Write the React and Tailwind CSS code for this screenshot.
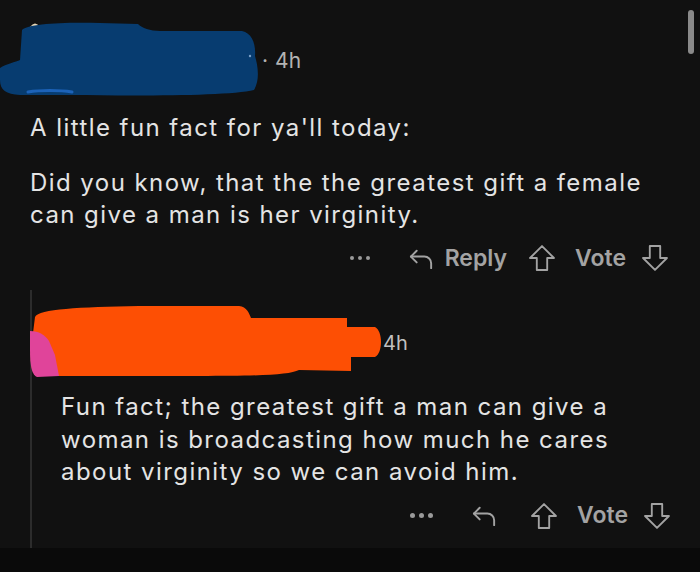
import React from 'react';

const ReplyIcon = ({ className }) => (
  <svg className={className} viewBox="0 0 28 28" fill="none" stroke="currentColor" strokeWidth={2} strokeLinecap="round" strokeLinejoin="round">
    <path d="M9 6 L3 12 L9 18" />
    <path d="M3 12 H17 a7 7 0 0 1 7 7 v5" />
  </svg>
);

const UpIcon = ({ className }) => (
  <svg className={className} viewBox="1.5 1.5 25 25" fill="none" stroke="currentColor" strokeWidth={1.8} strokeLinejoin="round">
    <path d="M14 2.5 L2.5 14 H9 V25.5 H19 V14 H25.5 Z" />
  </svg>
);

const DownIcon = ({ className }) => (
  <svg className={className} viewBox="1.5 1.5 25 25" fill="none" stroke="currentColor" strokeWidth={1.8} strokeLinejoin="round">
    <path d="M14 25.5 L2.5 14 H9 V2.5 H19 V14 H25.5 Z" />
  </svg>
);

const Dots = ({ size = 'w-[4px] h-[4px]' }) => (
  <div className="flex items-center gap-[4px]">
    <span className={`${size} rounded-full bg-[#9a9a9a]`} />
    <span className={`${size} rounded-full bg-[#9a9a9a]`} />
    <span className={`${size} rounded-full bg-[#9a9a9a]`} />
  </div>
);

export default function App() {
  return (
    <div className="w-[700px] h-[572px] bg-[#111111] overflow-hidden relative text-[#e4e4e4]" style={{ fontFamily: 'Inter, "Noto Sans", sans-serif' }}>
      {/* scrollbar */}
      <div className="absolute right-[6px] top-[10px] w-[6px] h-[44px] rounded-full bg-[#8a8a8a]" />

      {/* top comment */}
      <div className="h-[112px] flex items-center pb-[6px]">
        <div className="relative w-[262px] h-[80px]">
          <svg className="absolute left-0 top-[2px]" width="262" height="90" viewBox="0 15 262 90">
            <path d="M30 27 q5 -7 10 0 z" fill="#e8d8b8" />
            <path d="M22 30 C28 24 60 22 100 23 L138 24 C142 28 150 31 160 31 L242 31 C252 33 256 44 255 56 C258 66 260 80 254 90 C230 96 140 96 70 95 L20 95 C6 94 0 90 0 80 L0 68 C6 64 16 62 20 60 Z" fill="#073c70" />
            <path d="M28 92 C40 90 60 90 72 92" stroke="#1c62b8" strokeWidth="3" fill="none" strokeLinecap="round" />
            <circle cx="250" cy="56" r="1.2" fill="#7aa0c8" />
          </svg>
        </div>
        <span className="text-[21px] leading-none text-[#b3b3b3] mt-[14px]">·</span>
        <span className="text-[21px] leading-none text-[#b3b3b3] ml-[7px] mt-[14px]">4h</span>
      </div>

      <div className="pl-[30px] pr-[10px] text-[24px] tracking-[0.06em] leading-[32px]">
        <p>A little fun fact for ya'll today:</p>
        <p className="mt-[23px] whitespace-nowrap">Did you know, that the the greatest gift a female<br />can give a man is her virginity.</p>
      </div>

      <div className="h-[40px] mt-[7px] flex items-center justify-end pr-[32px] text-[#a3a3a3] text-[23px] font-semibold">
        <Dots />
        <ReplyIcon className="w-[27px] h-[27px] ml-[38px]" />
        <span className="ml-[10px]">Reply</span>
        <UpIcon className="w-[26px] h-[26px] ml-[22px]" />
        <span className="ml-[20px]">Vote</span>
        <DownIcon className="w-[26px] h-[26px] ml-[16px]" />
      </div>

      {/* reply */}
      <div className="ml-[30px] mt-[12px] border-l-2 border-[#2c2c2c] h-[258px]">
        <div className="h-[85px] flex items-center pt-[20px]">
          <div className="relative w-[351px] h-[70px]">
            <svg className="absolute left-[-2px] top-[-4px]" width="355" height="75" viewBox="31 305 355 75">
              <path d="M36 318 C40 310 80 308 140 307 L240 307 C248 308 250 314 252 319 L348 319 L348 328 L376 328 C384 332 384 354 376 358 L352 358 L352 372 L300 371 C290 376 260 377 200 377 L40 377 C33 376 31 368 32 350 Z" fill="#fd4f04" />
              <path d="M31 332 C40 332 46 336 50 342 L56 356 L60 377 L38 378 C33 376 31 368 31 350 Z" fill="#e0449a" />
            </svg>
          </div>
          <span className="text-[20px] leading-none text-[#c0c0c0]">4h</span>
        </div>
        <div className="pl-[29px] pr-[10px] text-[24px] tracking-[0.06em] leading-[32.5px] mt-[16px]">
          <p className="whitespace-nowrap">Fun fact; the greatest gift a man can give a<br />woman is broadcasting how much he cares<br />about virginity so we can avoid him.</p>
        </div>
        <div className="h-[40px] mt-[7px] flex items-center justify-end pr-[30px] text-[#a3a3a3] text-[23px] font-semibold">
          <Dots size="w-[5px] h-[5px]" />
          <ReplyIcon className="w-[27px] h-[27px] ml-[38px]" />
          <UpIcon className="w-[26px] h-[26px] ml-[33px]" />
          <span className="ml-[20px]">Vote</span>
          <DownIcon className="w-[26px] h-[26px] ml-[16px]" />
        </div>
      </div>

      <div className="h-[24px] bg-[#0a0a0a]" />
    </div>
  );
}
